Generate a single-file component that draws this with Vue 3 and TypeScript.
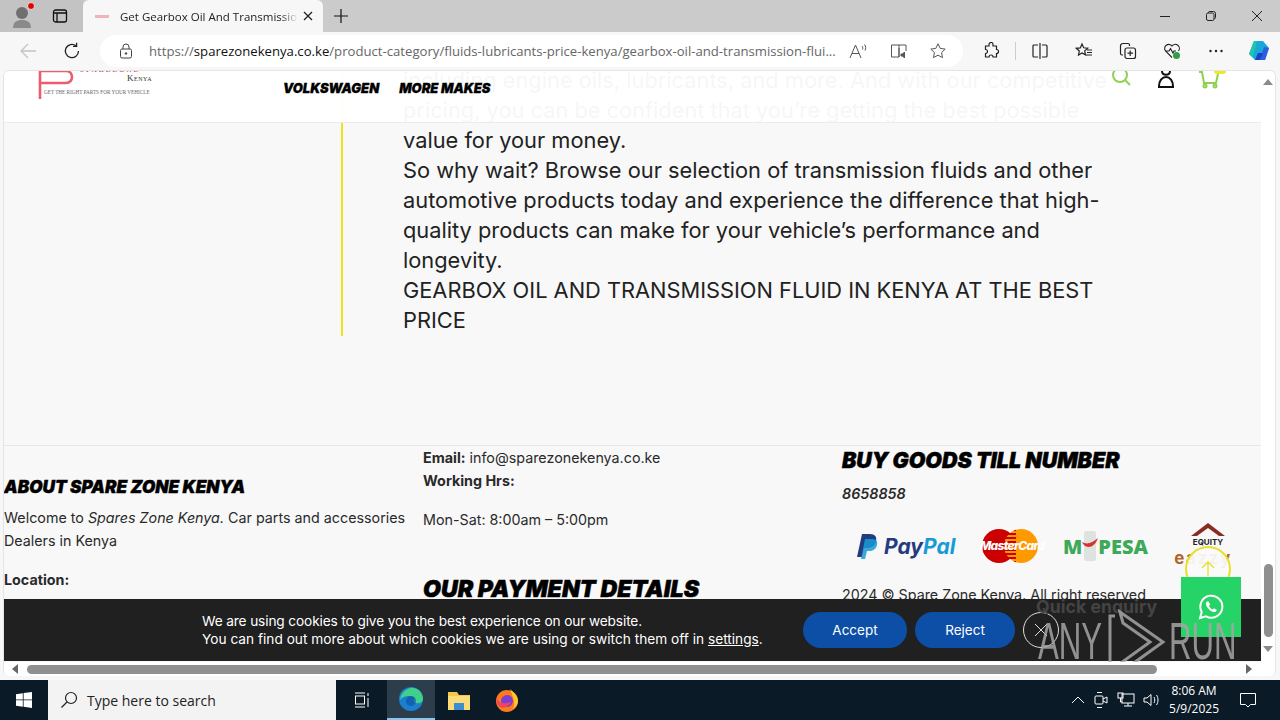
<template>
  <div class="screen">
    <header class="tabstrip">
      <div class="tabstrip__left">
        <span class="avatar">
          <svg width="24" height="28" viewBox="0 0 24 28"><circle cx="11" cy="11" r="6" fill="#6f6f6f" /><path d="M2 26c0-6 4-8 9-8s9 2 9 8z" fill="#8a8a8a" /><circle cx="20" cy="4" r="3.5" fill="#e30000" stroke="#ddd" /></svg>
        </span>
        <svg class="tabs-icon" width="16" height="16" viewBox="0 0 16 16" fill="none" stroke="#111" stroke-width="1.3"><rect x="1.5" y="2" width="13" height="12" rx="2" /><path d="M1.5 5h13M5 5v9" /></svg>
      </div>
      <div class="tab">
        <span class="tab__favicon"></span>
        <span class="tab__title">Get Gearbox Oil And Transmission Fluid</span>
        <svg width="12" height="12" viewBox="0 0 12 12" stroke="#222" stroke-width="1.3"><path d="M2 2l8 8M10 2l-8 8" /></svg>
      </div>
      <svg class="tab-new" width="16" height="16" viewBox="0 0 16 16" stroke="#111" stroke-width="1.2"><path d="M8 1v14M1 8h14" /></svg>
      <div class="window-btns">
        <svg width="12" height="12" viewBox="0 0 12 12" stroke="#222"><path d="M1 6.5h10" /></svg>
        <svg width="12" height="12" viewBox="0 0 12 12" stroke="#222" fill="none"><rect x="1.5" y="3" width="7.5" height="7.5" rx="1.5" /><path d="M3.5 3V2.5a1 1 0 0 1 1-1h4a2 2 0 0 1 2 2v4a1 1 0 0 1-1 1H9" /></svg>
        <svg width="12" height="12" viewBox="0 0 12 12" stroke="#222"><path d="M1 1l10 10M11 1L1 11" /></svg>
      </div>
    </header>

    <nav class="toolbar">
      <svg class="toolbar__back" width="18" height="18" viewBox="0 0 18 18" fill="none" stroke="#c4c4c4" stroke-width="1.3"><path d="M17 9H2M9 2L2 9l7 7" /></svg>
      <svg class="toolbar__reload" width="18" height="18" viewBox="0 0 18 18" fill="none" stroke="#222" stroke-width="1.3"><path d="M15.5 9A6.6 6.6 0 1 1 13 3.8" /><path d="M13.6 0.8v3.6H10" /></svg>
      <div class="address">
        <svg width="14" height="16" viewBox="0 0 14 16" fill="none" stroke="#444"><rect x="1.5" y="6" width="11" height="9" rx="1.5" /><path d="M4 6V4a3 3 0 0 1 6 0v2" /><circle cx="7" cy="10.5" r=".8" fill="#444" /></svg>
        <span class="address__url">https://<b>sparezonekenya.co.ke</b>/product-category/fluids-lubricants-price-kenya/gearbox-oil-and-transmission-flui...</span>
        <svg class="address__read" width="20" height="16" viewBox="0 0 20 16" fill="none" stroke="#555"><path d="M1 15L6.5 2 12 15M3 10.5h7" /><path d="M13 3c1 1 1 2.500 .5 3.500M15.500 1.500c1.500 2 1.500 4 .5 6" /></svg>
        <svg class="address__book" width="18" height="16" viewBox="0 0 18 16" fill="none" stroke="#555"><path d="M9 2H1.500v12H9zM9 2h7v6M9 5v9" /><path d="M11 11h1.500l2-2v6l-2-2H11z" fill="#555" /></svg>
        <svg class="address__star" width="18" height="18" viewBox="0 0 18 18" fill="none" stroke="#555"><path d="M9 1.800l2.200 4.600 5 .7-3.600 3.500.9 5L9 13.200l-4.500 2.400.9-5L1.800 7.100l5-.7z" /></svg>
      </div>
      <div class="toolbar__icons">
        <svg width="18" height="18" viewBox="0 0 18 18" fill="none" stroke="#222" stroke-width="1.200"><path d="M7 2.500a2 2 0 0 1 4 0V4h3.500v3.500a2 2 0 0 1 0 4V15H11a2 2 0 0 0-4 0H3.500v-3.500a2 2 0 0 0 0-4V4H7z" /></svg>
        <span class="toolbar__sep"></span>
        <svg width="18" height="18" viewBox="0 0 18 18" fill="none" stroke="#222" stroke-width="1.200"><path d="M9 1v16M7 3H3a1 1 0 0 0-1 1v10a1 1 0 0 0 1 1h4M11 3h4a1 1 0 0 1 1 1v10a1 1 0 0 1-1 1h-4" /></svg>
        <svg width="18" height="18" viewBox="0 0 18 18" fill="none" stroke="#222" stroke-width="1.200"><path d="M7 2l1.700 3.800 4 .4-3 2.700.8 4L7 11l-3.500 2 .8-4-3-2.700 4-.4zM12 8h5M12 10.500h5M11 13h6" /></svg>
        <svg width="18" height="18" viewBox="0 0 18 18" fill="none" stroke="#222" stroke-width="1.200"><rect x="6" y="6" width="10.500" height="10.500" rx="2" /><path d="M11.200 8.500v5.500M8.500 11.200h5.500M4 13H3a1.500 1.500 0 0 1-1.500-1.500V4A2.500 2.500 0 0 1 4 1.500h5A1.500 1.500 0 0 1 10.500 3v1" /></svg>
        <svg width="18" height="18" viewBox="0 0 18 18" fill="none" stroke="#222" stroke-width="1.100"><path d="M9 15.500L2.500 9A4 4 0 0 1 9 4a4 4 0 0 1 6.500 5" /><path d="M2.500 9H6l1.500-2.500L10 11l1-2h2" /><circle cx="13.500" cy="13.500" r="3.500" fill="#2f9e44" stroke="none" /></svg>
        <svg width="18" height="18" viewBox="0 0 18 18" fill="#222"><circle cx="3.500" cy="9" r="1.200" /><circle cx="9" cy="9" r="1.200" /><circle cx="14.500" cy="9" r="1.200" /></svg>
        <svg class="copilot" width="24" height="24" viewBox="0 0 24 24"><path d="M7 2h9l6 7-4 12H8L2 15z" fill="#1aa6d8" /><path d="M2 15l5-13h3L6 18z" fill="#1ec7a8" /><path d="M22 9l-4 12h-5l4-13z" fill="#2b5fe0" /><path d="M8 21l3-7 5 0-3 7z" fill="#1743c4" /></svg>
      </div>
    </nav>

    <main class="viewport">
      <div class="page">
        <section class="article">
          <div class="article__text">
            <p v-for="line in articleLines" :key="line">{{ line }}</p>
          </div>
        </section>

        <footer class="footer">
          <div class="footer__col footer__col--about">
            <h4 class="footer__small-head">ABOUT SPARE ZONE KENYA</h4>
            <p>Welcome to <i>Spares Zone Kenya.</i> Car parts and accessories Dealers in Kenya</p>
            <p class="footer__gap"><b>Location:</b></p>
          </div>
          <div class="footer__col">
            <p><b>Email:</b> info@sparezonekenya.co.ke</p>
            <p><b>Working Hrs:</b></p>
            <p class="footer__gap">Mon-Sat: 8:00am – 5:00pm</p>
            <h3 class="footer__big-head footer__big-head--pay">OUR PAYMENT DETAILS</h3>
          </div>
          <div class="footer__col">
            <h3 class="footer__big-head">BUY GOODS TILL NUMBER</h3>
            <p class="footer__till">8658858</p>
            <div class="pay-logos">
              <div class="paypal">
                <svg width="22" height="26" viewBox="0 0 22 26"><path d="M6 1h8c5 0 7 3 6 7-1 5-4 7-9 7H8l-2 9H1z" fill="#253b80" /><path d="M9 6h7c4 0 6 2 5 6-1 4-4 6-8 6h-2l-2 8H5z" fill="#179bd7" opacity=".85" /></svg>
                <span><b class="paypal__pay">Pay</b><b class="paypal__pal">Pal</b></span>
              </div>
              <div class="mastercard">
                <i class="mastercard__red"></i>
                <i class="mastercard__orange"></i>
                <span>MasterCard</span>
              </div>
              <div class="mpesa">
                <span>M</span>
                <svg width="16" height="30" viewBox="0 0 16 30"><rect x="2" y="0" width="12" height="30" rx="2" fill="#dfe3df" /><path d="M0 11c5 3 10 1 16-4-2 6-6 9-9 9-3 0-6-2-7-5z" fill="#d7342f" /></svg>
                <span>PESA</span>
              </div>
              <div class="equity">
                <svg width="34" height="15" viewBox="0 0 34 15"><path d="M0 14L17 1l17 13h-6L17 6 6 14z" fill="#8a2b24" /></svg>
                <b>EQUITY</b>
                <span>eazzy</span>
              </div>
            </div>
            <p class="footer__copy">2024 © Spare Zone Kenya. All right reserved</p>
          </div>
        </footer>
      </div>

      <div class="site-header">
        <div class="logo">
          <svg width="40" height="30" viewBox="0 0 40 30" fill="none" stroke="#ea5d6e" stroke-width="2.600"><path d="M2 29V1h26c8 0 8 12 0 12H3" /></svg>
          <span class="logo__name">SPAREZONE</span>
          <span class="logo__kenya">Kenya</span>
          <span class="logo__tag">GET THE RIGHT PARTS FOR YOUR VEHICLE</span>
        </div>
        <div class="site-nav">
          <span>VOLKSWAGEN</span>
          <span>MORE MAKES</span>
        </div>
        <div class="site-icons">
          <svg width="20" height="20" viewBox="0 0 20 20" fill="none" stroke="#8fd14f" stroke-width="2"><circle cx="9" cy="4" r="7" /><path d="M14 9l5 5" /></svg>
          <svg width="18" height="20" viewBox="0 0 18 20" fill="none" stroke="#111" stroke-width="2"><path d="M5 0c0 5 8 5 8 0M9 6c-4 0-7 4-7 9v1h14v-1c0-5-3-9-7-9z" /></svg>
          <div class="cart">
            <svg width="22" height="20" viewBox="0 0 22 20" fill="none" stroke="#8fd14f" stroke-width="2"><path d="M1 1h3l2 11h12l2-9" /><circle cx="7" cy="15" r="1.500" /><circle cx="17" cy="15" r="1.500" /></svg>
            <i class="cart__badge"></i>
          </div>
        </div>
      </div>

      <div class="cookie">
        <p><span class="cookie__first">We are using cookies to give you the best experience on our website.</span><br />You can find out more about which cookies we are using or switch them off in <u>settings</u>.</p>
        <button class="cookie__btn cookie__btn--accept">Accept</button>
        <button class="cookie__btn cookie__btn--reject">Reject</button>
        <span class="cookie__close">
          <svg width="14" height="14" viewBox="0 0 14 14" stroke="#ddd"><path d="M1 1l12 12M13 1L1 13" /></svg>
        </span>
      </div>

      <span class="to-top">
        <svg width="14" height="16" viewBox="0 0 14 16" fill="none" stroke="#e7e02a" stroke-width="1.300"><path d="M7 15V1M1 7l6-6 6 6" /></svg>
      </span>
      <span class="quick">Quick enquiry</span>
      <span class="whatsapp">
        <svg width="26" height="26" viewBox="0 0 26 26" fill="none"><path d="M2 24l1.700-6A11 11 0 1 1 8 22.300z" stroke="#fff" stroke-width="2" /><path d="M9 7.500c-1.500 1-1.500 3 0 5.500 2 3 4.500 4.500 6.500 5 1.500.3 3-.7 3.300-2l-2.800-1.800-1.300 1.200c-1.500-.5-3-2-3.700-3.700l1.200-1.300L10.500 7.500z" fill="#fff" /></svg>
      </span>
      <div class="watermark">
        <span class="watermark__word">ANY</span>
        <svg width="60" height="64" viewBox="0 0 60 64" fill="none" stroke="#a6a6a6" stroke-width="3"><path d="M8 7H3v48h5M13 3l43 30-39 28-6-5 32-23-27-19z" /></svg>
        <span class="watermark__word">RUN</span>
      </div>

      <div class="scroll-v">
        <svg width="10" height="6" viewBox="0 0 10 6"><path d="M0 6l5-6 5 6z" fill="#8a8a8a" /></svg>
        <div class="scroll-v__track"><span class="scroll-v__thumb"></span></div>
        <svg width="10" height="6" viewBox="0 0 10 6"><path d="M0 0l5 6 5-6z" fill="#8a8a8a" /></svg>
      </div>
      <div class="scroll-h">
        <svg width="6" height="10" viewBox="0 0 6 10"><path d="M6 0L0 5l6 5z" fill="#666" /></svg>
        <div class="scroll-h__track"><span class="scroll-h__thumb"></span></div>
        <svg width="6" height="10" viewBox="0 0 6 10"><path d="M0 0l6 5-6 5z" fill="#666" /></svg>
      </div>
    </main>

    <div class="taskbar">
      <span class="start">
        <svg width="16" height="16" viewBox="0 0 16 16" fill="#fff"><path d="M0 2.200l6.800-1v6.300H0zM7.600 1.100L16 0v7.500H7.600zM0 8.300h6.800v6.500L0 13.800zM7.600 8.300H16V16l-8.400-1.200z" /></svg>
      </span>
      <div class="search">
        <svg width="18" height="18" viewBox="0 0 18 18" fill="none" stroke="#222" stroke-width="1.200"><circle cx="11" cy="7" r="5.500" /><path d="M7 11l-5.500 5.500" /></svg>
        <span>Type here to search</span>
      </div>
      <span class="task task--view">
        <svg width="16" height="16" viewBox="0 0 16 16" fill="none" stroke="#fff"><path d="M1 1h10M1 15h10" /><rect x="1.500" y="4" width="9" height="8" /><path d="M14 1v3M14 6v9" /></svg>
      </span>
      <span class="task task--active">
        <svg width="24" height="24" viewBox="0 0 24 24"><circle cx="12" cy="12" r="12" fill="#1b7fd0" /><path d="M1 13C2 4 10 0 15 1c5 1 9 5 9 11 0 3-3 5-7 4-3-1-3-3-1-5-3-3-12-3-15 2z" fill="#3fd08c" /><circle cx="12" cy="14" r="5" fill="#0f4f9e" opacity=".6" /></svg>
      </span>
      <span class="task">
        <svg width="24" height="22" viewBox="0 0 24 22"><path d="M1 3h9l2 3h11v15H1z" fill="#f2c94c" /><rect x="1" y="7" width="22" height="14" fill="#fbdc79" /><rect x="7" y="14" width="10" height="7" fill="#3b8ed0" /></svg>
      </span>
      <span class="task">
        <svg width="24" height="24" viewBox="0 0 24 24"><circle cx="12" cy="13" r="11" fill="#ff7a1a" /><path d="M15 1c3 3 8 6 8 12 0 3-2 6-5 8 3-6 0-12-3-20z" fill="#ffc531" /><circle cx="12" cy="13" r="6" fill="#7b3fd4" /><path d="M2 10c2 6 8 6 14 4-2 5-8 7-11 5-3-2-4-6-3-9z" fill="#f0455a" /></svg>
      </span>
      <div class="tray">
        <svg width="14" height="10" viewBox="0 0 14 10" fill="none" stroke="#fff"><path d="M1 8l6-6 6 6" /></svg>
        <svg width="16" height="18" viewBox="0 0 16 18" fill="none" stroke="#fff"><rect x="2" y="5" width="8" height="8" rx="1" /><path d="M10 8l4-2v6l-4-2M4 1.500h5M4 16.500h5" /></svg>
        <svg width="18" height="16" viewBox="0 0 18 16" fill="none" stroke="#fff"><rect x="5" y="2" width="12" height="9" /><rect x="1" y="1" width="5" height="5" /><path d="M11 11v3M7 14h8M3.500 6v4H5" /></svg>
        <svg width="18" height="16" viewBox="0 0 18 16" fill="none" stroke="#fff"><path d="M1 6v4h3l4 3.500v-11L4 6zM11 5c1 2 1 4 0 6M13.500 3c2 3 2 7 0 10" /></svg>
        <div class="tray__clock"><span>8:06 AM</span><span>5/9/2025</span></div>
        <svg class="tray__notify" width="18" height="16" viewBox="0 0 18 16" fill="none" stroke="#fff"><path d="M1.500 1.500h15v11h-5L9 15l-2.500-2.500h-5z" /></svg>
      </div>
    </div>
  </div>
</template>

<script setup lang="ts">
const articleLines: string[] = [
  'including engine oils, lubricants, and more. And with our competitive',
  'pricing, you can be confident that you’re getting the best possible',
  'value for your money.',
  'So why wait? Browse our selection of transmission fluids and other',
  'automotive products today and experience the difference that high-',
  'quality products can make for your vehicle’s performance and',
  'longevity.',
  'GEARBOX OIL AND TRANSMISSION FLUID IN KENYA AT THE BEST',
  'PRICE',
]
</script>

<style>
html, body { margin: 0; }
</style>

<style scoped>
.screen {
  width: 1280px;
  height: 720px;
  overflow: hidden;
  display: flex;
  flex-direction: column;
  background: #f7f7f7;
  font-family: "Open Sans", "Noto Sans", sans-serif;
}
.tabstrip {
  height: 32px;
  flex: none;
  display: flex;
  align-items: center;
  background: #cbcbcb;
}
.tabstrip__left {
  width: 83px;
  height: 32px;
  display: flex;
  align-items: center;
  padding-left: 11px;
  box-sizing: border-box;
  gap: 17px;
  background: #c3c3c3;
}
.avatar { display: flex; }
.tabs-icon { flex: none; }
.tab {
  width: 240px;
  height: 32px;
  display: flex;
  align-items: center;
  box-sizing: border-box;
  padding: 0 9px 0 12px;
  background: #f7f7f7;
  border-radius: 6px 6px 0 0;
  font-size: 11.500px;
  color: #222;
}
.tab__favicon {
  width: 14px;
  height: 3px;
  flex: none;
  margin-right: 11px;
  background: #f0b4b8;
}
.tab__title {
  flex: 1;
  overflow: hidden;
  white-space: nowrap;
  -webkit-mask-image: linear-gradient(to right, #000 88%, transparent 98%);
  mask-image: linear-gradient(to right, #000 88%, transparent 98%);
}
.tab-new { margin-left: 10px; }
.window-btns {
  margin-left: auto;
  display: flex;
  gap: 34px;
  padding-right: 17px;
}
.toolbar {
  height: 38px;
  flex: none;
  display: flex;
  align-items: center;
  background: #f7f7f7;
}
.toolbar__back { margin-left: 19px; }
.toolbar__reload { margin-left: 26px; }
.address {
  width: 863px;
  height: 32px;
  margin-left: 19px;
  flex: none;
  display: flex;
  align-items: center;
  box-sizing: border-box;
  padding: 0 16px 0 19px;
  background: #fff;
  border-radius: 16px;
}
.address__url {
  margin-left: 16px;
  width: 688px;
  flex: none;
  font-size: 13.150px;
  color: #666;
  white-space: nowrap;
  overflow: hidden;
}
.address__url b { font-weight: 400; color: #111; }
.address__read { margin-left: 12px; }
.address__book { margin-left: 21px; }
.address__star { margin-left: 21px; }
.toolbar__icons {
  display: flex;
  align-items: center;
  margin-left: 19px;
  gap: 26px;
}
.toolbar__sep {
  width: 1px;
  height: 18px;
  margin: 0 -11px;
  background: #ccc;
}
.copilot { margin-left: -4px; }

.viewport {
  position: relative;
  height: 606px;
  flex: none;
  margin: 0 4px 4px 3px;
  overflow: hidden;
  background: #f8f8f9;
  border: 1px solid #e4e4e4;
  border-bottom: none;
  border-radius: 6px;
  box-sizing: border-box;
}
.page {
  width: 1258px;
  height: 591px;
  overflow: hidden;
  font-family: Inter, "Liberation Sans", sans-serif;
  color: #222;
}
.article {
  height: 380px;
  margin-top: -6px;
  padding-left: 337px;
  box-sizing: border-box;
}
.article__text {
  height: 271px;
  padding-left: 60px;
  border-left: 2px solid #eee21f;
  font-size: 21.800px;
  line-height: 30px;
  color: #222;
}
.article__text p { margin: 0; white-space: nowrap; }
.footer {
  display: grid;
  grid-template-columns: repeat(3, 419px);
  border-top: 1px solid #e6e6e6;
  font-size: 14.300px;
  line-height: 23px;
  color: #2a2a2a;
}
.footer__col p { margin: 0; }
.footer__col--about { padding-top: 29px; }
.footer__gap { margin-top: 16px !important; }
.footer__small-head {
  margin: 0 0 7px;
  font-size: 17.200px;
  line-height: 24px;
  font-weight: 900;
  font-style: italic;
  color: #000;
  -webkit-text-stroke: .4px #000;
}
.footer__big-head {
  margin: 2px 0 0;
  font-size: 21.400px;
  line-height: 24px;
  font-weight: 900;
  font-style: italic;
  color: #000;
  -webkit-text-stroke: .5px #000;
}
.footer__big-head--pay {
  margin-top: 46px;
  font-size: 23.200px;
}
.footer__till {
  margin-top: 10px !important;
  font-style: italic;
  font-weight: 600;
}
.pay-logos {
  display: flex;
  align-items: center;
  margin-top: 16px;
  height: 50px;
  padding-left: 14px;
}
.paypal {
  display: flex;
  align-items: center;
  gap: 6px;
  width: 126px;
  font-size: 21px;
  font-style: italic;
}
.paypal__pay { color: #253b80; }
.paypal__pal { color: #179bd7; }
.mastercard {
  position: relative;
  width: 56px;
  height: 34px;
  margin-right: 25px;
}
.mastercard i {
  position: absolute;
  top: 0;
  width: 34px;
  height: 34px;
  border-radius: 50%;
}
.mastercard__red { left: 0; background: #cc0000; }
.mastercard__orange {
  right: 0;
  background: repeating-linear-gradient(to bottom, #cc0000 0 2px, #ff9900 2px 4px) left / 12px 100% no-repeat, #ff9900;
}
.mastercard span {
  position: absolute;
  left: -2px;
  top: 8px;
  width: 60px;
  font-size: 12px;
  line-height: 18px;
  font-weight: 800;
  font-style: italic;
  text-align: center;
  letter-spacing: -.7px;
  color: #fff;
}
.mpesa {
  display: flex;
  align-items: center;
  width: 122px;
  font-size: 20px;
  font-weight: 800;
  color: #3fa95a;
  font-family: "Open Sans", sans-serif;
}
.equity {
  display: flex;
  flex-direction: column;
  align-items: center;
  width: 46px;
  margin-top: -3px;
  font-size: 8px;
  line-height: 10px;
  color: #222;
}
.equity span {
  margin-top: 3px;
  margin-left: -10px;
  font-size: 17px;
  line-height: 17px;
  font-weight: 700;
  letter-spacing: 1.500px;
  color: #b5652a;
}
.footer__copy { margin-top: 12px !important; }

.site-header {
  position: absolute;
  left: 0;
  right: 14px;
  top: 0;
  height: 52px;
  display: flex;
  background: rgba(255, 255, 255, .96);
  border-bottom: 1px solid #ececec;
  box-sizing: border-box;
}
.logo {
  position: relative;
  width: 279px;
  flex: none;
}
.logo svg { position: absolute; left: 34px; top: -1px; }
.logo__name {
  position: absolute;
  left: 76px;
  top: -5px;
  font: 700 7px/8px "Liberation Serif", serif;
  letter-spacing: 2px;
  color: #c9485a;
}
.logo__kenya {
  position: absolute;
  left: 123px;
  top: 2px;
  font: 9px/10px "Liberation Serif", serif;
  font-variant: small-caps;
  letter-spacing: .5px;
  color: #333;
}
.logo__tag {
  position: absolute;
  left: 40px;
  top: 17px;
  font: 5.200px/8px "Liberation Serif", serif;
  white-space: nowrap;
  color: #666;
}
.site-nav {
  display: flex;
  gap: 20px;
  padding-top: 9px;
  font: italic 900 13px/16px Inter, sans-serif;
  color: #000;
  -webkit-text-stroke: .3px #000;
}
.site-icons {
  margin-left: auto;
  display: flex;
  gap: 26px;
  padding-right: 41px;
  align-items: flex-start;
}
.cart { position: relative; margin-left: -3px; }
.cart__badge {
  position: absolute;
  right: -6px;
  top: 0;
  width: 12px;
  height: 3px;
  border-radius: 0 0 6px 6px;
  background: #eaea2a;
}
.cookie {
  position: absolute;
  left: 0;
  right: 14px;
  bottom: 15px;
  height: 62px;
  display: flex;
  align-items: center;
  box-sizing: border-box;
  padding-left: 198px;
  background: #202020;
  font-family: Inter, "Liberation Sans", sans-serif;
  color: #fff;
}
.cookie p {
  margin: 0;
  width: 601px;
  flex: none;
  font-size: 13.700px;
  line-height: 18px;
}
.cookie__first { letter-spacing: -.13px; }
.cookie__btn {
  height: 36px;
  border: none;
  border-radius: 18px;
  background: #0d4ea6;
  color: #fff;
  font: 13.500px Inter, "Liberation Sans", sans-serif;
}
.cookie__btn--accept { width: 104px; }
.cookie__btn--reject { width: 100px; margin-left: 8px; }
.cookie__close {
  width: 36px;
  height: 36px;
  margin-left: 8px;
  box-sizing: border-box;
  display: flex;
  align-items: center;
  justify-content: center;
  border: 1px solid #ddd;
  border-radius: 50%;
}
.to-top {
  position: absolute;
  left: 1181px;
  top: 475px;
  width: 46px;
  height: 46px;
  box-sizing: border-box;
  display: flex;
  align-items: center;
  justify-content: center;
  border: 2px solid #e7e02a;
  border-radius: 50%;
  background: rgba(250, 250, 250, .94);
}
.whatsapp {
  position: absolute;
  left: 1177px;
  top: 506px;
  width: 60px;
  height: 60px;
  display: flex;
  align-items: center;
  justify-content: center;
  background: #25d366;
}
.quick {
  position: absolute;
  left: 1032px;
  top: 525px;
  font: 700 17.700px/22px Inter, sans-serif;
  color: #444;
}
.watermark {
  position: absolute;
  left: 1034px;
  top: 538px;
  width: 194px;
  height: 64px;
  display: flex;
  align-items: center;
  color: #a6a6a6;
  opacity: .85;
  pointer-events: none;
}
.watermark svg { flex: none; margin: 0 2px 0 6px; }
.watermark__word {
  width: 63px;
  flex: none;
  font: 52px/64px "Liberation Sans", sans-serif;
  transform: scaleX(.6);
  transform-origin: left center;
}
.scroll-v {
  position: absolute;
  right: 0;
  top: 0;
  width: 14px;
  height: 591px;
  display: flex;
  flex-direction: column;
  align-items: center;
  justify-content: space-between;
  padding: 8px 0 10px;
  box-sizing: border-box;
  background: #fff;
}
.scroll-v__track { flex: 1; width: 100%; display: flex; justify-content: center; }
.scroll-v__thumb {
  width: 9px;
  height: 73px;
  margin-top: 479px;
  border-radius: 5px;
  background: #8f8f8f;
}
.scroll-h {
  position: absolute;
  left: 0;
  right: 0;
  top: 591px;
  height: 14px;
  display: flex;
  align-items: center;
  padding: 0 23px 0 8px;
  box-sizing: border-box;
  background: #fff;
}
.scroll-h__track { flex: 1; padding-left: 9px; }
.scroll-h__thumb {
  display: block;
  width: 1130px;
  height: 9px;
  border-radius: 5px;
  background: #8f8f8f;
}

.taskbar {
  height: 40px;
  flex: none;
  margin-top: auto;
  display: flex;
  align-items: center;
  background: #0a1a26;
  color: #fff;
}
.start {
  width: 48px;
  height: 40px;
  display: flex;
  align-items: center;
  justify-content: center;
  flex: none;
}
.search {
  width: 288px;
  height: 40px;
  flex: none;
  display: flex;
  align-items: center;
  gap: 9px;
  box-sizing: border-box;
  padding-left: 12px;
  background: #f3f3f3;
  color: #222;
  font-size: 14px;
}
.task {
  width: 48px;
  height: 40px;
  flex: none;
  display: flex;
  align-items: center;
  justify-content: center;
  box-sizing: border-box;
}
.task--view { width: 51px; }
.task--active {
  background: #2c3e4c;
  border-bottom: 2px solid #8ec3ea;
}
.tray {
  margin-left: auto;
  display: flex;
  align-items: center;
  gap: 8px;
  padding-right: 23px;
}
.tray__clock {
  display: flex;
  flex-direction: column;
  align-items: center;
  margin: 0 10px 0 0;
  font-size: 12px;
  line-height: 18px;
}
.tray__notify { margin-left: 2px; }
</style>
